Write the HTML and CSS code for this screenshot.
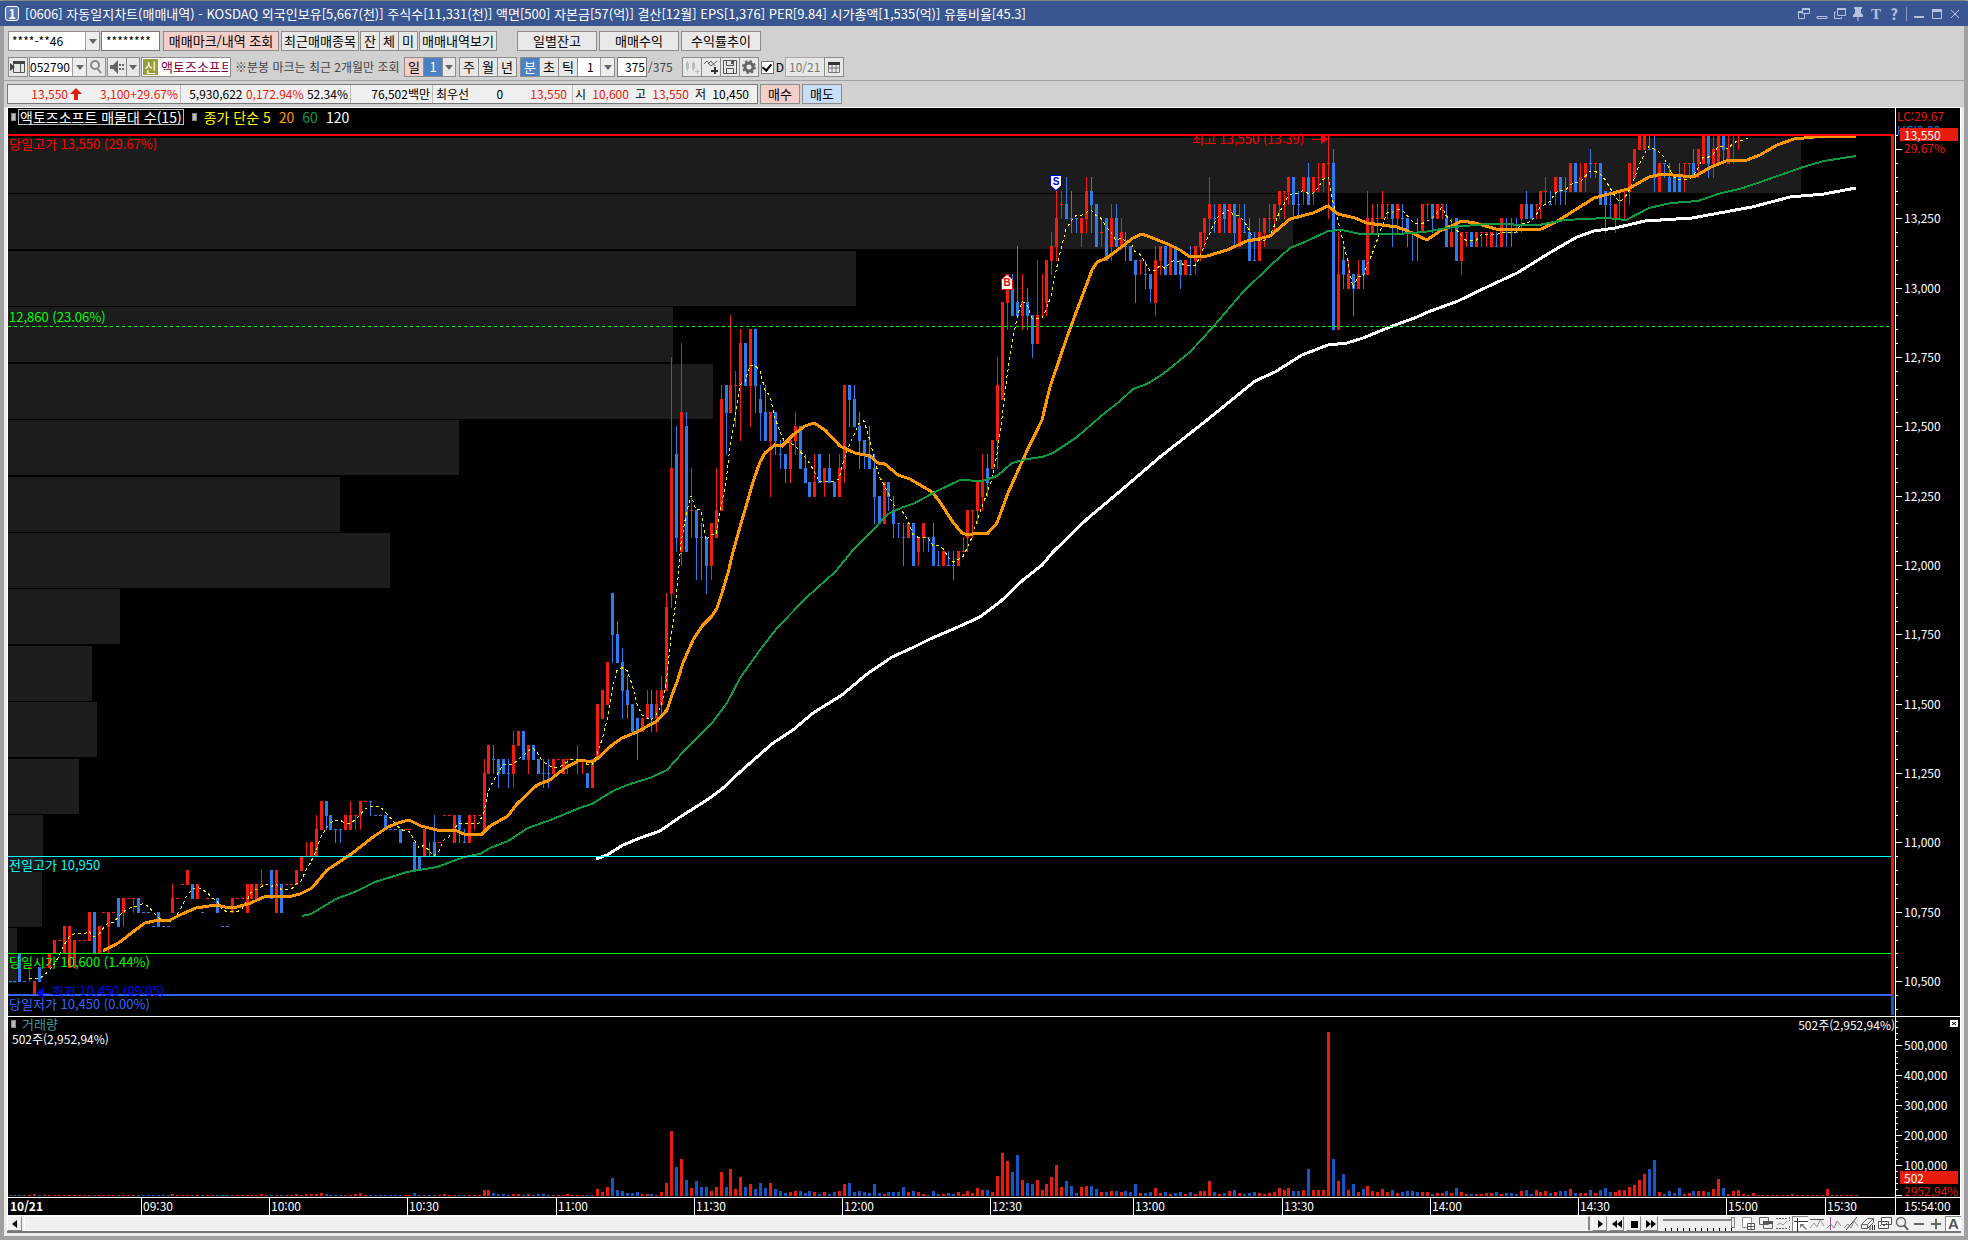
FILE: index.html
```html
<!DOCTYPE html>
<html lang="ko">
<head>
<meta charset="utf-8">
<title>[0606] 자동일지차트(매매내역)</title>
<link rel="stylesheet" href="styles.css">
</head>
<body>
<div class="window">
  <header class="titlebar">
    <span class="badge">1</span>
    <h1 class="title">[0606] 자동일지차트(매매내역) - KOSDAQ 외국인보유[5,667(천)] 주식수[11,331(천)] 액면[500] 자본금[57(억)] 결산[12월] EPS[1,376] PER[9.84] 시가총액[1,535(억)] 유통비율[45.3]</h1>
    <div class="wincontrols">
      <button aria-label="창 분리"><svg width="14" height="14"><path d="M5.500 1.500h7v5h-7zM5 4.500H1.500v7h6V7" fill="none" stroke="currentColor"/><path d="M5 2h8M1 5h4" stroke="currentColor" stroke-width="2"/></svg></button>
      <button aria-label="접기"><svg width="14" height="14"><path d="M2 9.500h10v2H2z" fill="none" stroke="currentColor"/></svg></button>
      <button aria-label="복제"><svg width="14" height="14"><path d="M4.500 1.500h8v7h-8zM3 5H1.500v6.500h7V10" fill="none" stroke="currentColor"/><path d="M4 2h9" stroke="currentColor" stroke-width="2"/></svg></button>
      <button aria-label="고정"><svg width="14" height="14"><path d="M3 0h8v2h-1v4l2 2v2H2V8l2-2V2H3zM6.500 10h1v4h-1z" fill="currentColor"/></svg></button>
      <button class="glyph serif">T</button>
      <button class="glyph">?</button>
      <span class="split"></span>
      <button aria-label="최소화"><svg width="14" height="14"><path d="M2 9h10v2H2z" fill="currentColor"/></svg></button>
      <button aria-label="최대화"><svg width="14" height="14"><path d="M2.500 2.500h9v9h-9z" fill="none" stroke="currentColor"/><path d="M2 2h10v3H2z" fill="currentColor"/></svg></button>
      <button aria-label="닫기"><svg width="14" height="14"><path d="M3 3l8 8M11 3l-8 8" stroke="currentColor" fill="none"/></svg></button>
    </div>
  </header>

  <section class="toolbars">
    <div class="row">
      <span class="combo account"><select aria-label="계좌"><option>****-**46</option></select><i class="arrow"></i></span>
      <input class="field password" aria-label="비밀번호" value="********">
      <button class="btn pink wide">매매마크/내역 조회</button>
      <button class="btn mid">최근매매종목</button>
      <span class="group"><button class="btn">잔</button><button class="btn">체</button><button class="btn">미</button></span>
      <button class="btn mid">매매내역보기</button>
      <span class="group spaced far"><button class="btn tab">일별잔고</button><button class="btn tab">매매수익</button><button class="btn tab">수익률추이</button></span>
    </div>
    <div class="row">
      <button class="btn icon" aria-label="종목창"><svg width="16" height="16"><path d="M3.500 2.500h11v11h-11zM10.500 2v11" fill="none" stroke="#555"/><path d="M3 2h12v3H3zM0 4l5 4-5 4z" fill="#444"/></svg></button>
      <span class="combo code"><select aria-label="종목코드"><option>052790</option></select><i class="arrow"></i><button class="btn icon" aria-label="검색"><svg width="14" height="14"><circle cx="6" cy="5" r="4" fill="none" stroke="#888" stroke-width="2"/><path d="M8 8l4 5" stroke="#888" stroke-width="2"/></svg></button></span>
      <span class="group"><button class="btn icon" aria-label="소리"><svg width="16" height="16"><path d="M1 6h3l5-5v14l-5-5H1z" fill="#666"/><path d="M11 5v2M11 9v2M14 5v2M14 9v2" stroke="#666" stroke-width="2"/></svg></button><button class="btn slim" aria-label="소리 설정"><i class="tri"></i></button></span>
      <label class="stock"><span class="tag">신</span><input value="액토즈소프트" readonly></label>
      <span class="note">※분봉 마크는 최근 2개월만 조회</span>
      <span class="group"><button class="btn pink">일</button><button class="btn blue">1</button><button class="btn slim" aria-label="일 주기"><i class="tri"></i></button></span>
      <span class="group"><button class="btn">주</button><button class="btn">월</button><button class="btn">년</button></span>
      <span class="group"><button class="btn blue">분</button><button class="btn">초</button><button class="btn">틱</button><span class="combo minute"><select aria-label="분 주기"><option>1</option></select><i class="arrow"></i></span></span>
      <span class="count"><input class="field" aria-label="표시 개수" value="375"><span class="total">/375</span></span>
      <span class="group">
        <button class="btn icon" aria-label="봉 추가"><svg width="16" height="16"><path d="M2 4h3v6H2zM8 4h3v6H8zM3 2h1v10H3zM9 2h1v10H9zM11 12h5v1h-5zM13 10h1v5h-1z" fill="#bbb"/></svg></button><button class="btn icon" aria-label="지표 추가"><svg width="16" height="16"><path d="M1 5l3-3 4 5 6-5M5 5l3-3 4 5" fill="none" stroke="#666"/><path d="M8 11h7v2H8zM11 8h2v7h-2z" fill="#333"/></svg></button><button class="btn icon" aria-label="저장"><svg width="16" height="16"><path d="M1.500 1.500h13v13h-13zM4.500 2v4.500h7V2M4.500 14V9.500h7V14" fill="none" stroke="#555"/><path d="M9 2h2v3H9z" fill="#555"/></svg></button><button class="btn icon" aria-label="설정"><svg width="16" height="16"><circle cx="8" cy="8" r="4" fill="none" stroke="#666" stroke-width="3"/><circle cx="8" cy="8" r="6" fill="none" stroke="#666" stroke-width="2" stroke-dasharray="2.400 2.300"/></svg></button>
      </span>
      <label class="tick"><input type="checkbox" checked>D</label>
      <span class="group"><input class="field date" aria-label="날짜" value="10/21" disabled><button class="btn icon" aria-label="달력"><svg width="14" height="14"><path d="M1.500 3.500h11v9h-11zM5 4v9M9 4v9M1 8h12" fill="none" stroke="#777"/><path d="M1 2h12v3H1z" fill="#333"/></svg></button></span>
    </div>
    <hr>
    <div class="row quotes">
      <div class="quote">
        <span class="cell last up"><b>13,550</b><svg width="12" height="12"><path d="M6 0l6 6H8v6H4V6H0z" fill="#e81c0c"/></svg><b>3,100</b><b>+29.67%</b></span>
        <span class="cell vol">5,930,622 <b class="up">0,172.94%</b> 52.34%</span>
        <span class="cell amount">76,502백만</span>
        <span class="cell best">최우선<span>0</span><b class="up">13,550</b></span>
        <span class="cell ohl">시<b class="up">10,600</b>고<b class="up">13,550</b>저<b>10,450</b></span>
      </div>
      <button class="btn trade pink">매수</button>
      <button class="btn trade sky">매도</button>
    </div>
  </section>

  <main class="frame">
    <div class="chart">
      <section class="pane price" id="price">
        <svg id="priceplot" viewBox="8 108 1887 908" preserveAspectRatio="none"></svg>
        <div class="legend"><i></i><span class="boxed">액토즈소프트 매물대 수(15)</span><i></i><span class="yellow">종가 단순 5</span><span class="orange">20</span><span class="green">60</span><span>120</span></div>
      </section>
      <section class="axis" id="priceaxis">
        <svg id="priceticks" viewBox="0 108 64 908" preserveAspectRatio="none"></svg>
        <div class="limits"><span class="up">LC:29.67</span><span class="down">HC:0.00</span></div>
        <div class="now"><strong>13,550</strong><span class="up">29.67%</span></div>
      </section>
      <section class="pane volume">
        <svg id="volumeplot" viewBox="8 1017 1887 180" preserveAspectRatio="none"></svg>
        <div class="legend teal"><i></i><span>거래량</span></div>
        <div class="volnote">502주(2,952,94%)</div>
        <div class="volnote right">502주(2,952,94%)</div>
      </section>
      <section class="axis" id="volumeaxis">
        <svg id="volumeticks" viewBox="0 1017 64 180" preserveAspectRatio="none"></svg>
        <button class="closepane" aria-label="거래량 닫기"><svg width="8" height="7"><path d="M2 2l4 3M6 2L2 5" stroke="#000"/></svg></button>
        <div class="now bottom"><strong>502</strong><span class="up">2952,94%</span></div>
      </section>
      <section class="times" id="times"><b>10/21</b></section>
      <section class="axis clock">15:54:00</section>
    </div>
    <footer class="controls">
      <button class="key" aria-label="왼쪽으로"><svg width="8" height="8"><path d="M6 0v8L1 4z"/></svg></button>
      <div class="track"></div>
      <button class="key" aria-label="재생"><svg width="8" height="8"><path d="M2 0v8l5-4z"/></svg></button>
      <button class="key" aria-label="뒤로"><svg width="10" height="8"><path d="M5 0v8L0 4zM10 0v8L5 4z"/></svg></button>
      <button class="key" aria-label="정지"><svg width="8" height="8"><path d="M1 1h7v7H1z"/></svg></button>
      <button class="key" aria-label="앞으로"><svg width="10" height="8"><path d="M0 0v8l5-4zM5 0v8l5-4z"/></svg></button>
      <input class="speed" type="range" aria-label="속도" value="100">
      <div class="tools">
        <button aria-label="새 차트"><svg width="16" height="16"><path d="M1.500 1.500h9v10h-9z" fill="#fff" stroke="#999"/><path d="M6.500 7.500h7v6h-7zM10 8v5M7 10.500h6" fill="#fff" stroke="#555"/></svg></button>
        <button aria-label="창 배열"><svg width="16" height="16"><path d="M1.500 1.500h9v7h-9zM5.500 5.500h9v7h-9z" fill="#eee" stroke="#666"/><path d="M5 5h10v3H5z" fill="#555"/></svg></button>
        <button aria-label="구간"><svg width="16" height="16"><path d="M1 2.500h12M1 12.500h12M14.500 1v4M14.500 10v4" stroke="#666" stroke-dasharray="2 1"/><path d="M2 9l3-2 3 2 4-4" fill="none" stroke="#999"/></svg></button>
        <button class="on" aria-label="십자선"><svg width="16" height="16"><path d="M4.500 1v14M1 4.500h14" stroke="#333"/><path d="M7 7h5l-2 1 4 4-1 1-4-4-2 2z" fill="#777"/></svg></button>
        <button aria-label="수평선"><svg width="16" height="16"><path d="M1 3.500h14" stroke="#555"/><path d="M1 12l4-5 3 4 3-7 4 6" fill="none" stroke="#999"/></svg></button>
        <button aria-label="수직선"><svg width="16" height="16"><path d="M4.500 1v13" stroke="#a58"/><path d="M1 12l4-4 3 4 3-7 4 5" fill="none" stroke="#888"/></svg></button>
        <button aria-label="추세선"><svg width="16" height="16"><path d="M3 14L14 1" stroke="#444"/><path d="M1 12l4-4 3 4 3-7 4 5" fill="none" stroke="#888"/></svg></button>
        <button aria-label="모두 지우기"><svg width="16" height="16"><path d="M1.500 8.500l6-6h6l-6 6zM1.500 8.500v4h6v-4M7.500 12.500l6-6v-4" fill="none" stroke="#666"/><path d="M10 10v4M12.500 9v5M14.500 9v5" stroke="#333"/></svg></button>
        <button aria-label="비교"><svg width="16" height="16"><path d="M4.500 1.500h10v7h-10zM1.500 5.500h10v7h-10z" fill="#fff" stroke="#555"/><path d="M3 10l2-2 2 2 3-3" fill="none" stroke="#555"/></svg></button>
        <button aria-label="확대경"><svg width="16" height="16"><circle cx="7" cy="6" r="4.500" fill="none" stroke="#666" stroke-width="1.500"/><path d="M10 9l4 5" stroke="#555" stroke-width="2"/></svg></button>
        <button aria-label="축소"><svg width="16" height="16"><path d="M3 7h10v2H3z" fill="#666"/></svg></button>
        <button aria-label="확대"><svg width="16" height="16"><path d="M3 7h10v2H3zM7 3h2v10H7z" fill="#666"/></svg></button>
        <button class="on letter">A</button>
      </div>
    </footer>
  </main>
</div>
<script src="chart.js"></script>
</body>
</html>
```
FILE: styles.css
```css
* { box-sizing: border-box; }
html, body { margin: 0; height: 100%; }
body, button, input, select {
  font: 13px/14px "Noto Sans CJK KR", sans-serif;
  color: #000;
}
b { font-weight: normal; }
button { padding: 0; border: 0; background: none; white-space: nowrap; }
svg { display: block; }

.window {
  display: flex; flex-direction: column; min-height: 100vh;
  border: solid #a0a0a0; border-width: 1px 4px 4px; border-top-color: #848484;
  background: #d1d1d1;
}
.titlebar {
  display: flex; align-items: center; gap: 6px; height: 25px;
  margin: 0 -4px; padding: 0 6px 0 5px; background: #3a5691; color: #fff;
}
.badge {
  width: 14px; height: 15px; border: 1px solid #fff; border-radius: 3px;
  background: #5c78b4; font-weight: bold; text-align: center; line-height: 13px;
}
.title { flex: 1; margin: 0; font-size: 13px; font-weight: normal; white-space: nowrap; }
.wincontrols { display: flex; align-items: center; gap: 4px; }
.wincontrols button { width: 14px; color: #b4c2e0; }
.wincontrols .glyph { font-size: 15px; font-weight: bold; }
.wincontrols .serif { font-family: "Liberation Serif", serif; }
.split { width: 1px; height: 14px; margin: 0 1px; background: #8a9cc4; }

.toolbars { padding: 5px 4px 3px; }
.row { display: flex; gap: 1px; height: 20px; margin-bottom: 6px; }
.toolbars hr { height: 1px; margin: -3px -4px 3px; border: 0; background: #a0a0a0; }
.toolbars .quotes { margin: 0; gap: 2px; }

.btn { display: grid; place-items: center; min-width: 20px; border: 1px solid #8c8c8c; background: #e8e8e8; }
.pink { background: #f4cfca; }
.sky { background: #c8def4; }
.blue { background: #4a80c4; color: #fff; }
.wide { width: 116px; margin: 0 1px 0 2px; }
.mid { width: 78px; }
.tab { width: 80px; }
.trade { width: 40px; }
.slim { min-width: 0; width: 14px; }
.group { display: flex; }
.group .btn + .btn, .group .btn + .combo, .group .field + .btn { margin-left: -1px; }
.spaced { gap: 2px; }
.spaced .btn + .btn { margin-left: 0; }
.far { margin-left: 19px; }
.row .group + .group { margin-left: 2px; }

.combo { display: flex; border: 1px solid #8c8c8c; background: #fff; }
.combo select { flex: 1; min-width: 0; appearance: none; border: 0; padding: 0 3px; background: #fff; font-size: 12px; }
.combo .btn { margin: -1px -1px -1px 0; }
.arrow { display: grid; place-items: center; width: 14px; border-left: 1px solid #a0a0a0; background: #eee; }
.arrow::after, .tri { content: ""; width: 0; border: 4px solid transparent; border-top: 5px solid #666; border-bottom: 0; }
.account { width: 92px; }
.code { width: 77px; }
.combo.code select { padding: 0; }
.minute { width: 38px; }
.combo.minute select { padding-left: 9px; }
.field { border: 1px solid #777; padding: 0 4px; background: #fff; font-size: 12px; }
.password { width: 59px; }
.stock { display: flex; width: 90px; border: 1px solid #8c8c8c; background: #fff; }
.tag { margin: 1px; width: 15px; background: #94a03c; color: #fff; text-align: center; line-height: 16px; }
.stock input { flex: 1; min-width: 0; border: 0; padding: 0 2px; color: #800040; background: none; }
.note { width: 171px; padding-left: 3px; color: #444; font-size: 12px; line-height: 20px; white-space: nowrap; }
.count { display: flex; margin-left: 1px; }
.count .field { width: 30px; padding: 0 1px; text-align: right; }
.total { width: 34px; padding-left: 1px; color: #444; font-size: 12px; line-height: 20px; }
.tick { display: flex; align-items: center; gap: 2px; margin-left: 1px; width: 23px; font-size: 12px; }
.tick input { display: grid; place-items: center; appearance: none; width: 13px; height: 13px; margin: 0; border: 1px solid #777; background: #fff; }
.tick input:checked::after { content: ""; width: 4px; height: 7px; margin-top: -2px; border: solid #000; border-width: 0 2px 2px 0; transform: rotate(40deg); }
.date { width: 40px; padding: 0 3px; border-color: #aaa; background: #e8e8e8; color: #777; }

.quote { display: flex; width: 751px; margin-left: -1px; border: 1px solid #777; background: #f0f0f0; font-size: 12px; line-height: 18px; white-space: pre; }
.cell { display: flex; align-items: center; justify-content: flex-end; padding-right: 2px; border-right: 1px solid #bbb; }
.up { color: #e81c0c; }
.down { color: #2f6fe0; }
.last { width: 173px; }
.last b { width: 48px; text-align: right; }
.last svg { margin: 0 0 0 2px; }
.vol { width: 170px; }
.amount { width: 82px; }
.best { width: 140px; justify-content: space-between; padding: 0 5px 0 3px; }
.ohl { flex: 1; justify-content: space-between; padding: 0 8px 0 2px; border: 0; }

.frame {
  flex: 1; display: flex; flex-direction: column;
  padding: 0 3px 3px; background: #ececec;
}
.chart {
  flex: 1; display: grid; grid-template: 909fr 181fr 17px / 1fr 65px;
  border: 1px solid #fff; background: #000; color: #fff;
}
.pane, .axis { position: relative; min-height: 0; border-bottom: 1px solid #fff; }
.pane > svg, .axis > svg { position: absolute; inset: 0; width: 100%; height: 100%; shape-rendering: crispEdges; }
.axis { border-left: 1px solid #fff; font-size: 12px; }
.legend { position: relative; display: flex; align-items: center; gap: 8px; padding: 1px 3px; font-size: 14px; }
.legend i { width: 5px; height: 8px; background: #bbb; border: 1px solid #888; }
.legend i + span { margin-left: -6px; }
.boxed { padding: 0 1px; border: 1px solid #bbb; }
.legend i + .yellow { margin-left: -1px; }
.yellow { color: #ff0; }
.orange { color: #ff9800; }
.green { color: #109a40; }
.teal { color: #3a9a9a; padding-top: 0; font-size: 13px; }
.legend.teal i + span { margin-left: -2px; }
.volnote { position: relative; padding-left: 4px; font-size: 12px; line-height: 13px; }
.volnote.right { position: absolute; top: 1px; right: 0; }
.label { position: absolute; left: 1px; margin-top: 2px; white-space: nowrap; }
.label.above { margin-top: -16px; }
.scale { position: absolute; left: 8px; margin-top: -7px; }
.limits { position: absolute; top: 1px; left: 1px; display: grid; }
.now { position: absolute; top: 20px; left: 4px; right: 2px; display: grid; line-height: 13px; }
.now > * { padding-left: 4px; }
.now strong { background: #e81c0c; font-weight: normal; }
.now.bottom { top: auto; bottom: 0; }
.closepane { position: absolute; top: 3px; right: 2px; background: #fff; }
.marker { position: absolute; width: 12px; height: 15px; margin: 0 0 0 -6px; padding-top: 1px; font: bold 10px/12px "Liberation Sans", sans-serif; text-align: center; isolation: isolate; }
.marker svg { position: absolute; inset: 0; z-index: -1; }
.marker.buy { color: #e00; padding-top: 3px; }
.marker.sell { color: #00d; }
.times { position: relative; padding: 1px 2px; font-size: 12px; }
.times b { font-weight: bold; }
.times span { position: absolute; top: 0; height: 100%; padding: 1px; border-left: 1px solid #fff; }
.clock { border-bottom: 0; padding: 1px 8px; }

.controls { display: flex; align-items: stretch; gap: 2px; height: 17px; border-bottom: 2px solid #777; background: #f0f0f0; }
.key { display: grid; place-items: center; width: 15px; border: 1px solid #fff; border-right-color: #888; border-bottom-color: #888; }
.track { flex: 1; border: 1px solid #fff; border-right: 2px solid #888; }
.speed { appearance: none; width: 72px; margin: 0 4px 0 3px; background: linear-gradient(#888, #888) 0 3px / 100% 2px no-repeat, repeating-linear-gradient(90deg, #000 0 1px, transparent 1px 6px) 2px 12px / 68px 3px no-repeat; }
.speed::-webkit-slider-thumb { appearance: none; width: 4px; height: 11px; margin-top: -3px; border: 1px solid #888; background: #eee; }
.tools { display: flex; gap: 1px; }
.tools button { width: 16px; }
.tools .on { background: #fff; border: solid #888; border-width: 1px 0 0 1px; }
.tools .letter { font: bold 15px/14px "Liberation Sans", sans-serif; color: #555; }
```
FILE: chart.js
```js
// Each candle: x, colour, body top, body bottom, high, low (50-won steps above 10,450), volume bar height.
const CANDLES = `
10b 1 1 1 1 1;14b 1 1 1 1 1;19b 3 1 3 1 1;24b 1 1 1 1 1;29r 2 2 2 1 1;34r 1 0 1 0 2;39b 2 1 2 1 1;44r 2 2 2 2 1;49r 3 2 3 2 1;54r 4 3 4 3 1;
59r 4 4 4 4 1;64r 5 3 5 3 1;69r 5 2 5 2 1;74r 4 2 4 2 1;79r 4 4 4 4 1;84r 4 4 4 4 1;89r 6 4 6 4 1;94b 6 3 6 3 1;99r 5 3 5 3 1;103r 6 6 6 6 1;
108r 6 5 6 3 1;113r 6 6 6 6 1;118b 7 5 7 5 1;123r 7 6 7 5 1;128r 7 7 7 7 1;133r 7 7 7 6 1;138b 7 6 7 6 1;143b 6 6 6 6 1;148b 6 6 6 6 1;153b 5 5 5 5 1;
158b 6 5 6 5 1;163b 5 5 5 5 1;168b 5 5 5 5 1;172r 7 6 8 6 2;177r 7 7 7 7 1;182r 8 8 8 8 1;187r 9 8 9 8 1;192b 8 7 8 7 1;197r 8 7 8 7 1;202b 6 6 6 6 1;
207r 7 7 7 7 1;212r 7 7 7 7 1;217b 7 6 7 6 1;222b 5 5 5 5 1;227b 5 5 5 5 1;232r 7 6 7 6 1;237r 7 7 7 7 1;242r 7 7 7 7 1;247r 8 6 8 6 1;251r 8 7 8 7 1;
256r 8 7 8 7 1;261r 8 8 9 8 2;266r 8 8 8 8 1;271b 9 7 9 7 1;276r 9 6 9 6 1;281b 8 6 8 6 1;286r 8 8 8 8 1;291r 8 8 8 8 1;296r 9 8 9 8 2;301r 10 9 10 9 1;
306r 10 10 11 10 2;311r 11 10 11 10 2;316r 12 10 13 10 2;321r 14 12 14 12 3;326b 14 13 14 12 2;330b 13 12 13 12 1;335b 12 12 12 11 1;340b 12 12 12 11 1;345r 13 12 13 12 1;350r 13 12 14 12 1;
355r 13 13 13 12 2;360r 14 13 14 12 3;365r 14 14 14 14 1;370b 14 14 14 13 1;375b 13 13 13 13 1;380b 13 13 13 13 1;385b 13 12 13 12 1;390b 12 12 12 12 1;395b 12 12 12 12 1;400b 12 11 12 11 1;
405r 12 12 12 12 1;409r 12 12 12 12 1;414b 11 9 11 9 3;419b 10 9 10 9 1;424r 12 10 12 10 1;429b 10 10 11 10 1;434b 11 10 13 10 1;439r 11 11 11 11 1;444r 13 13 13 13 2;449r 13 13 13 13 1;
454r 13 11 13 11 1;459b 13 12 13 11 1;464b 11 11 12 11 1;469r 13 11 13 11 1;474r 13 13 13 12 1;479r 13 13 13 13 1;484r 16 12 17 12 6;488r 18 16 18 16 6;493b 17 17 18 16 3;498b 17 16 17 15 2;
503b 17 16 17 16 2;508b 16 16 17 15 1;513r 18 16 19 15 2;518r 19 18 19 18 2;523b 19 17 19 17 1;528r 18 17 18 16 2;533b 18 17 18 17 1;538b 17 16 17 16 2;543b 16 16 17 15 2;548b 16 16 17 15 1;
553r 17 16 17 16 1;558r 17 17 17 17 1;563r 17 16 17 16 1;567r 17 17 17 16 2;572r 17 17 17 17 1;577r 17 17 18 16 1;582r 17 17 17 16 1;587b 16 15 16 15 1;592r 17 15 17 15 1;597r 21 17 21 17 7;
602r 22 20 22 20 4;607r 24 21 24 21 9;612b 29 26 29 24 18;617b 26 24 27 24 6;622b 24 22 25 20 5;627b 22 21 23 20 3;632b 21 19 21 19 3;637b 20 19 20 17 4;642r 20 19 20 19 2;647r 21 20 22 20 2;
651b 21 20 22 19 2;656r 21 20 22 19 1;661r 22 21 23 20 4;666r 28 22 29 22 13;671r 38 29 46 28 65;676b 39 33 41 32 29;681r 42 32 47 31 37;686b 41 32 42 32 16;691r 35 35 38 33 8;696b 35 33 35 30 15;
701b 33 33 34 30 9;706b 33 31 33 29 9;711r 34 31 34 30 5;716r 35 33 38 33 9;721r 43 35 44 35 24;726b 44 42 44 39 9;730r 44 42 49 42 27;735r 44 44 45 41 7;740r 47 44 48 40 19;745b 47 44 47 44 9;
750r 48 44 48 41 12;755b 48 44 48 42 7;760b 43 42 44 40 13;765b 42 40 44 40 8;770r 42 40 42 36 13;775b 42 40 42 39 7;780b 39 39 40 38 5;785b 39 38 39 37 3;790r 40 38 40 37 4;795r 41 40 42 39 5;
800b 41 38 41 38 5;805b 38 37 39 37 3;809b 37 36 37 36 5;814r 37 36 39 36 4;819b 39 37 39 37 2;824r 38 37 38 36 4;829b 38 37 39 37 2;834b 37 36 37 36 4;839r 38 36 39 36 5;844r 44 38 44 37 12;
849b 44 43 44 41 13;854b 43 41 44 41 4;859b 41 40 42 38 5;864b 40 39 40 38 4;869b 39 38 41 38 3;874b 38 36 39 34 12;879b 36 34 36 34 3;884r 37 34 37 34 2;888b 37 36 37 35 4;893b 35 34 36 33 4;
898b 34 34 34 33 4;903b 33 33 34 31 9;908r 34 33 34 33 4;913b 34 31 34 31 5;918r 33 32 33 31 4;923r 34 33 34 32 2;928b 33 33 33 32 1;933b 33 31 34 31 5;938b 31 31 32 31 2;943r 32 31 32 31 2;
948b 31 31 32 31 3;953b 31 31 32 30 2;958r 32 31 32 31 4;963r 32 32 33 32 2;967r 35 33 35 32 5;972r 35 35 35 33 3;977r 37 35 37 34 8;982r 37 36 39 35 6;987b 38 37 39 36 6;992r 40 38 40 38 4;
997r 44 40 46 38 20;1002r 50 43 50 43 43;1007r 52 50 52 48 35;1012b 51 49 52 49 24;1017b 50 49 54 49 41;1022r 50 49 52 48 16;1027b 50 49 51 48 13;1032b 49 47 49 46 12;1037r 49 47 53 47 16;1042r 49 49 52 49 6;
1046r 53 50 53 49 12;1051r 54 53 55 52 19;1056r 56 54 58 53 31;1061r 57 57 58 56 9;1066b 57 56 59 56 15;1071b 56 56 58 55 10;1076b 56 56 56 55 3;1081r 56 55 56 54 9;1086r 58 56 59 55 10;1091b 58 57 59 55 10;
1096b 57 54 57 54 7;1101r 55 55 56 54 4;1106b 56 53 56 53 4;1111r 56 54 57 53 5;1116b 56 54 57 54 5;1121r 55 54 56 54 4;1125b 54 54 55 53 5;1130b 54 53 54 53 4;1135b 53 52 53 50 12;1140r 53 53 53 52 3;
1145b 52 52 53 51 3;1150b 52 51 52 50 4;1155r 53 50 54 49 8;1160r 54 53 54 52 3;1165b 54 52 54 52 4;1170r 54 52 54 52 2;1175b 54 52 54 52 3;1180b 53 52 53 51 4;1185r 53 52 53 52 2;1190b 52 52 54 52 4;
1195r 54 53 54 52 2;1200r 55 54 55 53 5;1204r 56 55 56 54 5;1209r 57 56 59 55 15;1214b 56 56 57 55 4;1219r 57 55 57 55 2;1224b 57 56 57 55 3;1229r 57 55 57 55 5;1234b 57 55 57 54 6;1239r 56 54 57 54 3;
1244b 55 55 57 55 2;1249b 55 53 56 53 3;1254b 53 53 55 53 4;1259r 55 53 56 53 3;1264r 56 55 56 54 2;1269r 56 56 57 55 3;1274r 57 56 57 55 4;1279r 58 57 58 56 8;1284r 58 58 58 56 6;1288r 59 58 59 57 8;
1293b 59 57 59 56 5;1298b 57 57 58 56 5;1303r 59 58 59 57 6;1308b 59 57 60 57 27;1313r 59 58 59 57 6;1318r 59 59 60 58 6;1323r 60 59 60 58 6;1328r 60 60 62 56 164;1333b 60 48 61 48 37;1338r 52 48 55 48 15;
1343b 53 52 54 51 22;1348r 52 51 53 51 6;1353b 52 51 52 49 12;1358r 52 51 53 51 4;1363b 53 52 53 51 7;1367r 56 52 58 52 10;1372r 56 55 57 55 5;1377r 56 56 57 55 4;1382r 57 56 58 56 7;1387r 57 57 57 56 4;
1392b 57 56 57 54 6;1397r 57 56 57 55 3;1402b 56 56 57 55 4;1407b 56 55 56 54 5;1412b 55 55 55 53 5;1417b 55 55 56 53 4;1422r 57 55 57 55 4;1427r 57 57 57 56 4;1432b 57 56 57 55 2;1437r 57 56 57 56 3;
1442r 57 57 57 56 3;1446b 56 54 57 54 5;1451r 55 54 56 54 3;1456b 56 53 56 53 8;1461r 55 53 55 52 4;1466r 55 55 55 54 2;1471b 55 54 55 54 2;1476r 55 54 55 54 2;1481r 55 55 55 54 2;1486r 55 55 55 54 3;
1491r 55 54 55 54 3;1496b 54 54 55 54 4;1501r 56 54 56 54 2;1506b 55 55 56 54 3;1511b 55 55 56 54 3;1516b 55 55 56 55 2;1521r 57 56 57 55 5;1526b 57 56 58 56 6;1531b 57 56 57 56 2;1536r 57 57 57 56 6;
1540r 58 57 58 56 4;1545r 58 58 59 57 5;1550b 57 57 58 57 3;1555r 59 58 59 57 4;1560b 59 58 59 57 5;1565b 58 58 59 57 5;1570r 60 58 60 58 7;1575b 60 58 60 58 3;1580r 59 58 60 58 3;1585r 60 59 60 58 3;
1590b 60 60 61 59 6;1595r 60 60 60 59 3;1600b 60 57 60 57 6;1605b 58 57 58 55 8;1610b 57 57 58 56 4;1615r 57 56 57 55 4;1619r 58 58 58 56 6;1624r 58 58 58 56 6;1629r 60 58 60 57 9;1634r 61 59 61 59 11;
1639r 62 61 62 61 16;1644r 62 61 62 61 22;1649b 61 61 62 61 27;1654b 61 59 62 58 36;1659r 60 58 60 58 4;1664b 60 60 60 59 2;1669b 59 58 60 58 5;1674b 59 58 59 58 3;1679b 59 58 60 58 8;1684r 60 60 60 58 2;
1689r 60 60 60 59 3;1693b 60 59 61 59 5;1698r 61 60 61 59 5;1703r 62 60 62 60 5;1708b 62 60 62 59 4;1713r 61 60 62 59 7;1718r 62 60 62 60 17;1723b 62 61 62 60 8;1728r 61 60 62 60 2;1733r 62 62 62 60 5;
1738r 62 62 62 61 6;1743r 62 62 62 62 2;1748r 62 62 62 62 1;1753r 62 62 62 62 3;1758r 62 62 62 62 1;1762r 62 62 62 62 1;1767r 62 62 62 62 1;1772r 62 62 62 62 1;1777r 62 62 62 62 1;1782r 62 62 62 62 1;
1787r 62 62 62 62 1;1792r 62 62 62 62 2;1797r 62 62 62 62 1;1802r 62 62 62 62 1;1807r 62 62 62 62 1;1812r 62 62 62 62 1;1817r 62 62 62 62 1;1822r 62 62 62 62 1;1827r 62 62 62 62 7;1832r 62 62 62 62 1;
1836r 62 62 62 62 1;1841r 62 62 62 62 1;1846r 62 62 62 62 1;1851r 62 62 62 62 1;1856r 62 62 62 62 1`
  .trim().split(';').map(s => {
    const [, x, c, rest] = s.trim().match(/^(\d+)([rb]) (.*)$/);
    const [top, bot, hi, lo, vol] = rest.split(' ').map(Number);
    return { x: +x, up: c === 'r', top, bot, hi, lo, vol };
  });

const MA20 = '103,951 120,942 134,931 145,923 154,921 170,920 182,914 196,908 216,905 225,907 237,907 248,904 264,897 277,896 288,897 300,894 312,888 327,870 350,855 373,837 388,827 398,823 409,820 421,826 437,830 457,831 464,834 482,834 490,826 508,816 517,804 537,785 550,780 565,768 580,760 592,762 597,759 612,745 622,738 637,732 657,721 667,710 672,695 677,682 683,663 693,640 702,626 712,616 717,608 722,593 728,573 733,552 740,527 747,503 753,482 760,462 765,453 775,445 782,446 793,435 805,426 814,423 825,430 840,446 855,453 870,456 878,463 885,464 898,475 910,479 932,492 940,502 952,521 962,533 968,535 977,533 988,533 997,523 1008,493 1025,455 1042,420 1050,387 1067,337 1080,302 1092,270 1097,262 1107,258 1123,246 1133,238 1142,234 1150,237 1170,245 1180,250 1190,257 1207,256 1227,250 1247,241 1258,239 1270,236 1290,219 1313,213 1328,206 1338,214 1355,218 1367,223 1397,227 1408,231 1427,240 1440,231 1462,221 1475,223 1496,229 1539,230 1556,222 1594,198 1628,189 1649,177 1662,174 1694,177 1711,167 1726,161 1747,160 1760,155 1777,145 1794,139 1824,136 1856,136';
const MA60 = '302,916 311,914 336,899 357,891 375,882 407,872 437,867 464,857 480,854 490,848 508,841 528,828 553,819 582,807 592,804 603,797 615,790 630,784 650,778 667,770 683,752 712,723 727,703 740,678 760,650 777,628 807,597 835,572 853,550 873,530 888,514 903,507 913,504 937,491 960,480 982,481 997,476 1012,463 1027,459 1042,457 1053,453 1077,437 1100,417 1120,401 1133,389 1147,384 1163,374 1190,352 1213,327 1243,292 1270,266 1290,248 1307,241 1328,231 1342,230 1360,234 1397,234 1424,232 1453,227 1487,224 1539,225 1564,220 1607,218 1626,220 1649,208 1671,203 1698,201 1718,194 1743,188 1769,179 1803,167 1824,161 1856,156';
const MA120 = '596,859 607,855 623,845 640,838 660,831 680,817 707,800 722,789 740,772 757,757 773,743 793,730 813,713 842,695 867,674 892,657 912,648 930,639 958,627 980,617 1000,602 1023,580 1042,565 1053,552 1087,519 1118,493 1160,457 1207,420 1255,381 1275,372 1302,355 1328,345 1347,343 1363,338 1390,327 1417,317 1428,312 1458,301 1487,287 1517,273 1551,252 1577,237 1594,231 1615,228 1645,221 1692,218 1752,207 1790,197 1824,194 1856,188';
const PROFILE = [1801, 1293, 856, 673, 713, 459, 340, 390, 120, 92, 97, 79, 43, 42, 17];
const LINES = [
  { p: 13550, c: '#f00', w: 2, t: '당일고가 13,550 (29.67%)' },
  { p: 12860, c: '#0f0', w: 1, t: '12,860 (23.06%)', dash: '3 3', above: true },
  { p: 10950, c: '#0ff', w: 1, t: '전일고가 10,950' },
  { p: 10600, c: '#0f0', w: 1, t: '당일시가 10,600 (1.44%)' },
  { p: 10450, c: '#36f', w: 2, t: '당일저가 10,450 (0.00%)' },
];
const TIMES = [[141, '09:30'], [269, '10:00'], [407, '10:30'], [556, '11:00'], [694, '11:30'], [842, '12:00'], [990, '12:30'], [1133, '13:00'], [1282, '13:30'], [1430, '14:00'], [1578, '14:30'], [1726, '15:00'], [1825, '15:30']];

const $ = id => document.getElementById(id);
const RED = '#f41c0c', BLUE = '#2f7bee';
const yLevel = k => Math.round(995 - 13.87 * k);
const yPrice = p => yLevel((p - 10450) / 50);
const rect = (x, y, w, h, fill) => `<rect x="${x}" y="${y}" width="${w}" height="${h}" fill="${fill}"/>`;
const poly = (points, color, w, extra = '') => `<polyline points="${points}" fill="none" stroke="${color}" stroke-width="${w}" ${extra}/>`;
const pctX = x => (x - 8) / 1887 * 100 + '%';
const pctY = y => (y - 108) / 908 * 100 + '%';
const add = (parent, tag, cls, style, html) => {
  const el = document.createElement(tag);
  el.className = cls;
  Object.assign(el.style, style);
  el.innerHTML = html;
  $(parent).append(el);
};

let out = PROFILE.map((right, i) => rect(8, Math.round(138 + 56.43 * i), right - 8, 55, '#1c1c1c')).join('');
for (const c of CANDLES) {
  const color = c.up ? RED : BLUE, top = yLevel(c.top), hi = yLevel(c.hi);
  out += rect(c.x - 1, top, 3, c.top === c.bot ? 1 : yLevel(c.bot) - top + 1, color);
  if (c.hi > c.top || c.lo < c.bot) out += rect(c.x, hi, 1, yLevel(c.lo) - hi + 1, color);
}
const closes = CANDLES.map(c => c.up ? c.top : c.bot);
const ma5 = CANDLES.slice(4).map((c, i) => `${c.x},${995 - 13.87 * closes.slice(i, i + 5).reduce((a, b) => a + b) / 5}`);
out += poly(ma5.join(' '), '#ff0', 1, 'stroke-dasharray="3 3"');
out += poly(MA20, '#ff9800', 3) + poly(MA60, '#109a40', 2) + poly(MA120, '#fff', 3);
for (const l of LINES) {
  const y = yPrice(l.p), cy = l.w === 1 ? y + .5 : y;
  out += `<path d="M8 ${cy}H1892" stroke="${l.c}" stroke-width="${l.w}" ${l.dash ? `stroke-dasharray="${l.dash}"` : ''}/>`;
  add('price', 'span', l.above ? 'label above' : 'label', { top: pctY(y), color: l.c }, l.t);
}
out += rect(1891, 134, 3, 861, '#e81c0c') + rect(1891, 995, 3, 20, '#1458c8');
out += '<path d="M1312 139h9v-5l6 5-6 5v-5h-9z" fill="#f00" stroke="#f00"/><path d="M50 993h-8v4l-5-4 5-4v4h8z" fill="#00f" stroke="#00f"/>';
$('priceplot').innerHTML = out;

add('price', 'span', 'label', { left: pctX(1192), top: pctY(130), color: '#f00' }, '최고 13,550 (13:39)');
add('price', 'span', 'label', { left: pctX(52), top: pctY(982), color: '#00f' }, '최저 10,450 (09:05)');
add('price', 'span', 'marker sell', { left: pctX(1056), top: pctY(175) },
  '<svg width="12" height="16"><path d="M.5.5h11v10L6 15.500.5 10.500z" fill="#fff" stroke="#00d"/></svg>S');
add('price', 'span', 'marker buy', { left: pctX(1007), top: pctY(274) },
  '<svg width="12" height="16"><path d="M6 .5l5.500 5v10H.5v-10z" fill="#fff" stroke="#e00"/></svg>B');

let ticks = '';
for (let p = 10400; p <= 13550; p += 50) {
  const major = p % 250 === 0;
  ticks += rect(0, yPrice(p), major ? 6 : 2, 1, '#fff');
  // The 13,500 label would lie under the current-price box.
  if (major && p < 13500) add('priceaxis', 'span', 'scale', { top: pctY(yPrice(p)) }, p.toLocaleString('en'));
}
$('priceticks').innerHTML = ticks;

$('volumeplot').innerHTML = CANDLES.map(c => rect(c.x - 1, 1196 - c.vol, 3, c.vol, c.up ? '#e81c0c' : '#1458c8')).join('');
ticks = '';
for (let v = 0; v <= 29; v++) {
  const y = 1195 - 6 * v, major = v && v % 5 === 0;
  ticks += rect(0, y, v % 5 === 0 ? 6 : 2, 1, '#fff');
  if (major) add('volumeaxis', 'span', 'scale', { top: (y - 1017) / 180 * 100 + '%' }, (v * 20000).toLocaleString('en'));
}
$('volumeticks').innerHTML = ticks;
for (const [x, t] of TIMES) add('times', 'span', '', { left: pctX(x) }, t);
```
